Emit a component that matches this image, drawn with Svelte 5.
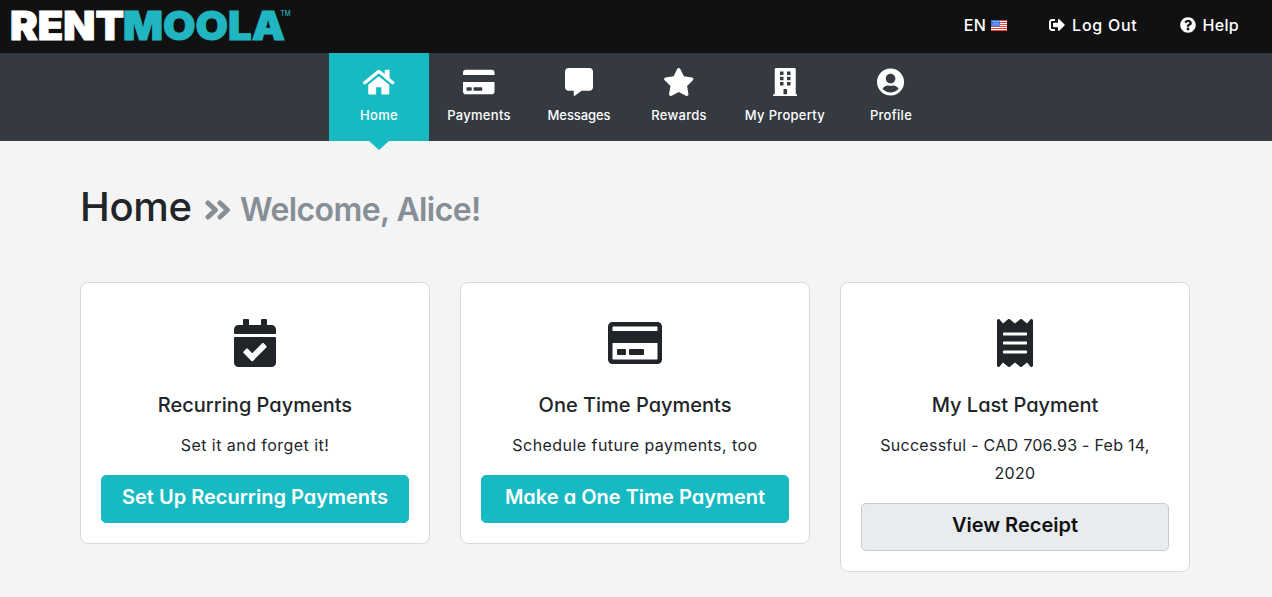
<script>
  const icons = {
    card: 'M0 432c0 26.5 21.5 48 48 48h480c26.5 0 48-21.5 48-48V256H0v176zm192-68c0-6.6 5.4-12 12-12h136c6.6 0 12 5.4 12 12v40c0 6.6-5.4 12-12 12H204c-6.6 0-12-5.4-12-12v-40zm-128 0c0-6.6 5.4-12 12-12h72c6.6 0 12 5.4 12 12v40c0 6.6-5.4 12-12 12H76c-6.6 0-12-5.4-12-12v-40zM576 80v48H0V80c0-26.5 21.5-48 48-48h480c26.5 0 48 21.5 48 48z',
    message: 'M448 0H64C28.7 0 0 28.7 0 64v288c0 35.3 28.7 64 64 64h96v84c0 9.8 11.2 15.5 19.1 9.7L304 416h144c35.3 0 64-28.7 64-64V64c0-35.3-28.7-64-64-64z',
    star: 'M259.3 17.8L194 150.2 47.9 171.5c-26.2 3.8-36.7 36.1-17.7 54.6l105.7 103-25 145.5c-4.5 26.3 23.2 46 46.4 33.7L288 439.6l130.7 68.7c23.2 12.2 50.9-7.4 46.4-33.7l-25-145.5 105.7-103c19-18.5 8.5-50.8-17.7-54.6L382 150.2 316.7 17.8c-11.7-23.6-45.6-23.9-57.4 0z',
    building: 'M436 480h-20V24c0-13.3-10.7-24-24-24H56C42.7 0 32 10.7 32 24v456H12c-6.6 0-12 5.4-12 12v20h448v-20c0-6.6-5.4-12-12-12zM128 64h64v64h-64zM256 64h64v64h-64zM128 160h64v64h-64zM256 160h64v64h-64zM128 256h64v64h-64zM256 256h64v64h-64zM192 384h64v96h-64z',
    profile: 'M248 8C111 8 0 119 0 256s111 248 248 248 248-111 248-248S385 8 248 8zm0 96c48.6 0 88 39.4 88 88s-39.4 88-88 88-88-39.4-88-88 39.4-88 88-88zm0 344c-58.7 0-111.3-26.6-146.5-68.2 18.8-35.4 55.6-59.8 98.5-59.8 2.4 0 4.8.4 7.1 1.1 13 4.2 26.6 6.9 40.9 6.9 14.3 0 28-2.7 40.9-6.9 2.3-.7 4.7-1.1 7.1-1.1 42.9 0 79.7 24.4 98.5 59.8C359.3 421.4 306.7 448 248 448z',
    home: 'M288 150L480 308V464c0 12-8 20-20 20H336V352H240V484H116c-12 0-20-8-20-20V308z',
    logout: 'M497 273L329 441c-15 15-41 4.5-41-17v-96H152c-13.3 0-24-10.7-24-24v-96c0-13.3 10.7-24 24-24h136V88c0-21.4 25.9-32 41-17l168 168c9.3 9.4 9.3 24.6 0 34zM192 436v-40c0-6.6-5.4-12-12-12H96c-17.7 0-32-14.3-32-32V160c0-17.7 14.3-32 32-32h84c6.6 0 12-5.4 12-12V76c0-6.6-5.4-12-12-12H96c-53 0-96 43-96 96v192c0 53 43 96 96 96h84c6.6 0 12-5.4 12-12z',
    help: 'M504 256c0 137-111 248-248 248S8 393 8 256C8 119 119 8 256 8s248 111 248 248zM262.7 90c-54.5 0-89.3 23-116.6 63.8-3.5 5.3-2.4 12.4 2.7 16.2l34.7 26.3c5.2 4 12.6 3 16.7-2.1 17.9-22.7 30.1-35.8 57.3-35.8 20.4 0 45.7 13.1 45.7 33 0 15-12.4 22.7-32.5 34C247.1 238.5 216 254.9 216 296v4c0 6.6 5.4 12 12 12h56c6.6 0 12-5.4 12-12v-1.3c0-28.5 83.2-29.7 83.2-106.7 0-58-60.2-102-116.5-102zM256 338c-25.4 0-46 20.6-46 46s20.6 46 46 46 46-20.6 46-46-20.6-46-46-46z',
    calendar: 'M436 160H12c-6.6 0-12-5.4-12-12v-36c0-26.5 21.5-48 48-48h48V12c0-6.6 5.4-12 12-12h40c6.6 0 12 5.4 12 12v52h128V12c0-6.6 5.4-12 12-12h40c6.6 0 12 5.4 12 12v52h48c26.5 0 48 21.5 48 48v36c0 6.6-5.4 12-12 12zM12 192h424c6.6 0 12 5.4 12 12v260c0 26.5-21.5 48-48 48H48c-26.5 0-48-21.5-48-48V204c0-6.6 5.4-12 12-12zm333.3 95.9l-28.2-28.4c-4.7-4.7-12.3-4.7-17 0L194.1 364.7l-46-46.4c-4.7-4.7-12.3-4.7-17 0l-28.4 28.2c-4.7 4.7-4.7 12.3 0 17l82.6 83.3c4.7 4.7 12.3 4.7 17 0l142.9-141.8c4.7-4.7 4.7-12.3.1-17.1z',
    outline: 'M527.9 32H48.1C21.5 32 0 53.5 0 80v352c0 26.5 21.5 48 48.1 48h479.8c26.6 0 48.1-21.5 48.1-48V80c0-26.5-21.5-48-48.1-48zM54.1 80h467.8c3.3 0 6 2.7 6 6v42H48.1V86c0-3.3 2.7-6 6-6zm467.8 352H54.1c-3.3 0-6-2.7-6-6V256h479.8v170c0 3.3-2.7 6-6 6zM192 332v40c0 6.6-5.4 12-12 12h-72c-6.6 0-12-5.4-12-12v-40c0-6.6 5.4-12 12-12h72c6.6 0 12 5.4 12 12zm192 0v40c0 6.6-5.4 12-12 12H236c-6.6 0-12-5.4-12-12v-40c0-6.6 5.4-12 12-12h136c6.6 0 12 5.4 12 12z',
    receipt: 'M358.4 3.2L320 48 265.6 3.2a15.9 15.9 0 0 0-19.2 0L192 48 137.6 3.2a15.9 15.9 0 0 0-19.2 0L64 48 25.6 3.2C15-4.7 0 2.8 0 16v480c0 13.2 15 20.7 25.6 12.8L64 464l54.4 44.8a15.9 15.9 0 0 0 19.2 0L192 464l54.4 44.8a15.9 15.9 0 0 0 19.2 0L320 464l38.4 44.8c10.5 7.9 25.6.4 25.6-12.8V16c0-13.2-15-20.7-25.6-12.8zM72 144h240a8 8 0 0 1 8 8v16a8 8 0 0 1-8 8H72a8 8 0 0 1-8-8v-16a8 8 0 0 1 8-8zM72 240h240a8 8 0 0 1 8 8v16a8 8 0 0 1-8 8H72a8 8 0 0 1-8-8v-16a8 8 0 0 1 8-8zM72 336h240a8 8 0 0 1 8 8v16a8 8 0 0 1-8 8H72a8 8 0 0 1-8-8v-16a8 8 0 0 1 8-8z'
  };
  const nav = [
    { label: 'Home', icon: 'home', w: 576, active: true },
    { label: 'Payments', icon: 'card', w: 576 },
    { label: 'Messages', icon: 'message', w: 512, snug: true },
    { label: 'Rewards', icon: 'star', w: 576 },
    { label: 'My Property', icon: 'building', w: 448, wide: true },
    { label: 'Profile', icon: 'profile', w: 496 }
  ];
  const cards = [
    { icon: 'calendar', w: 448, title: 'Recurring Payments', text: 'Set it and forget it!', action: 'Set Up Recurring Payments' },
    { icon: 'outline', w: 576, title: 'One Time Payments', text: 'Schedule future payments, too', action: 'Make a One Time Payment' },
    { icon: 'receipt', w: 384, title: 'My Last Payment', text: 'Successful - CAD 706.93 - Feb 14, 2020', action: 'View Receipt', plain: true }
  ];
</script>

{#snippet glyph(name, w, size)}
  <svg class="glyph" viewBox="0 0 {w} 512" width={(w * size) / 512} height={size} aria-hidden="true">
    <path d={icons[name]} fill-rule="evenodd" />
    {#if name === 'home'}
      <path d="M412 32h60q14 0 14 14V230L398 160V46q0-14 14-14z" />
      <path class="roof" d="M32 270L270 73q18-14 36 0L544 270" />
    {/if}
  </svg>
{/snippet}

<header class="top">
  <svg class="logo" width="282" height="34" viewBox="0 0 282 34">
    <text class="rent" x="-1" y="31.5" textLength="114" lengthAdjust="spacingAndGlyphs">RENT</text>
    <text class="moola" x="112" y="31.5" textLength="162" lengthAdjust="spacingAndGlyphs">MOOLA</text>
    <text class="tm" x="269.5" y="8" textLength="10" lengthAdjust="spacingAndGlyphs">TM</text>
  </svg>
  <nav class="account">
    <a class="lang" href="#lang">EN
      <svg width="16" height="11" viewBox="0 0 16 11">
        <rect width="16" height="11" fill="#fff" />
        <path d="M0 .5h16M0 2.5h16M0 4.5h16M0 6.5h16M0 8.5h16M0 10.5h16" stroke="#f5423f" />
        <rect width="9" height="6.5" fill="#3c72dc" />
        <path d="M1.5 1.5h7M2.5 3.3h6M1.5 5h7" stroke="#fff" stroke-width=".8" stroke-dasharray=".9 1.1" />
      </svg>
    </a>
    <a class="logout" href="#logout">{@render glyph('logout', 512, 16)}Log Out</a>
    <a class="help" href="#help">{@render glyph('help', 512, 16)}Help</a>
  </nav>
</header>

<nav class="main">
  {#each nav as item}
    <a href="#{item.icon}" class="item" class:active={item.active} class:wide={item.wide} class:snug={item.snug}>
      {@render glyph(item.icon, item.w, 28)}
      <span>{item.label}</span>
    </a>
  {/each}
</nav>

<main>
  <h1>
    <span class="page">Home</span>
    <svg class="chev" width="26" height="22" viewBox="0 0 26 22"><path d="M3 4l7.5 7L3 18M15 4l7.5 7L15 18" /></svg>
    <small>Welcome, Alice!</small>
  </h1>
  <div class="cards">
    {#each cards as c}
      <section class="card">
        {@render glyph(c.icon, c.w, 48)}
        <h2>{c.title}</h2>
        <p class:tight={c.plain}>{c.text}</p>
        <button class:plain={c.plain}>{c.action}</button>
      </section>
    {/each}
  </div>
</main>

<style>
  :global(body) { margin: 0; background: #f4f4f4; color: #212529; font: 16px/28px Inter, sans-serif; }
  a { color: #fff; text-decoration: none; }
  .glyph { display: block; fill: currentColor; flex: none; }
  .roof { fill: none; stroke: currentColor; stroke-width: 60; stroke-linecap: round; }
  .top { box-sizing: border-box; height: 53px; padding: 0 33px 0 11px; background: #111; display: flex; justify-content: space-between; align-items: flex-start; }
  .logo { margin-top: 8px; overflow: visible; }
  .logo text { font-family: Inter, sans-serif; font-weight: 900; font-size: 39.5px; fill: #fff; stroke: #fff; stroke-width: 1px; }
  .logo .moola { fill: #20b5c0; stroke: #20b5c0; }
  .logo .tm { fill: #20b5c0; stroke: none; font-size: 7.5px; font-weight: 500; }
  .account { display: flex; margin-top: 11px; font-weight: 500; letter-spacing: .3px; }
  .account a { display: flex; align-items: center; }
  .lang { gap: 5px; margin-right: 42px; }
  .logout { gap: 7px; margin-right: 42px; letter-spacing: .75px; }
  .help { gap: 7px; }
  .main { height: 88px; padding-left: 329px; background: #343a40; display: flex; }
  .item { position: relative; box-sizing: border-box; width: 100px; height: 88px; padding-top: 15px; display: flex; flex-direction: column; align-items: center; font-size: 13px; line-height: 20px; font-weight: 500; letter-spacing: .3px; }
  .item span { margin-top: 8.5px; white-space: nowrap; }
  .snug { letter-spacing: -.1px; }
  .wide { width: 112px; }
  .active { background: #17bac2; }
  .active::after { content: ''; position: absolute; left: 40px; top: 88px; border: 10px solid transparent; border-top: 9px solid #17bac2; border-bottom: 0; }
  main { padding: 42px 82px 0 80px; }
  h1, h2, button { font-family: Inter, sans-serif; font-feature-settings: 'cv11'; }
  h1 { margin: 0 0 51px; height: 48px; display: flex; align-items: baseline; font-size: 40px; line-height: 48px; font-weight: 500; }
  .page { letter-spacing: -.3px; width: 113px; }
  .chev { margin: 0 9px 0 12px; }
  .chev path { fill: none; stroke: #868e96; stroke-width: 5; stroke-linecap: round; stroke-linejoin: round; }
  small { font-size: 32px; font-weight: 600; color: #868e96; letter-spacing: -.6px; }
  .cards { display: grid; grid-template-columns: repeat(3, 350px); gap: 30px; align-items: start; }
  .card { box-sizing: border-box; padding: 36px 20px 20px; background: #fff; border: 1px solid #d9d9d9; border-radius: 8px; display: flex; flex-direction: column; align-items: center; text-align: center; }
  h2 { margin: 26px 0 14px; font-size: 20px; line-height: 24px; font-weight: 500; }
  p { margin: 0 0 16px; letter-spacing: .45px; }
  .tight { letter-spacing: .27px; }
  button { box-sizing: border-box; width: 308px; height: 48px; padding: 0 0 5px; border: 1px solid #17bac2; border-radius: 5px; background: #17bac2; color: #fff; font-size: 20px; line-height: 24px; font-weight: 600; }
  .plain { background: #e8ecef; border-color: #c8cccf; color: #111; }
</style>
